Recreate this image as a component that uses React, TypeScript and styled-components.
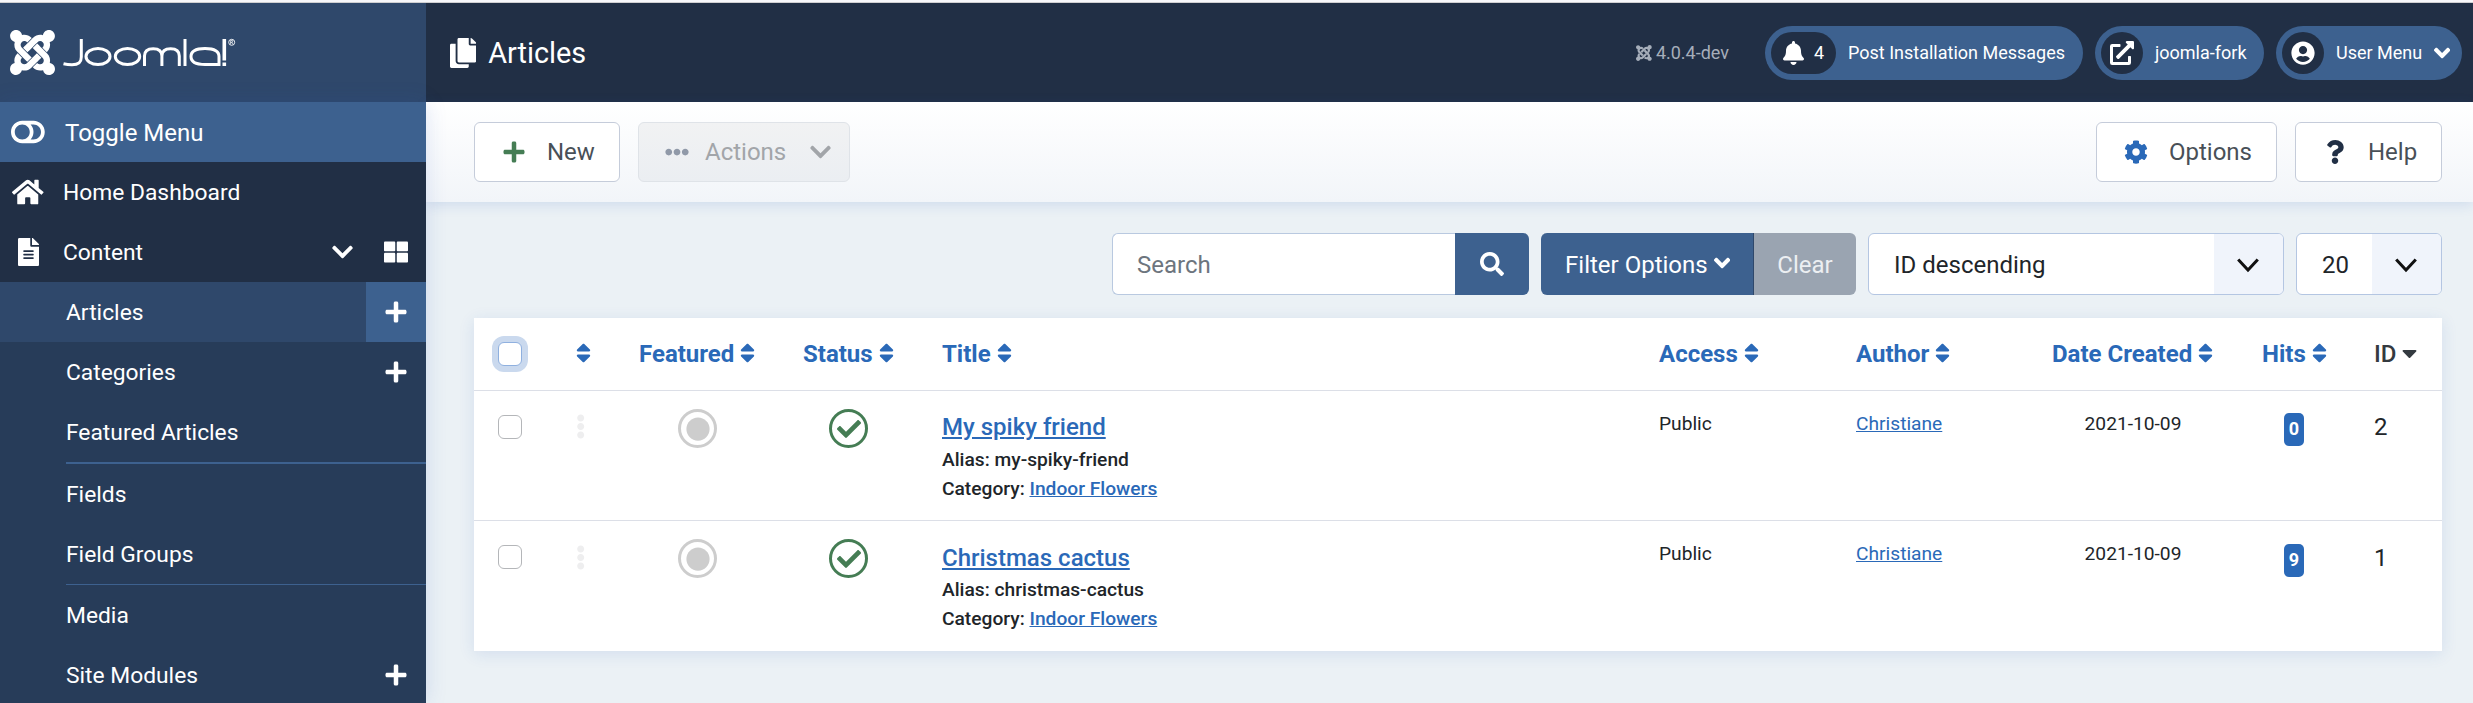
import React from 'react';
import styled, { createGlobalStyle, css } from 'styled-components';
import {
  FaJoomla, FaToggleOff, FaHome, FaFileAlt, FaThLarge, FaPlus, FaCopy, FaBell, FaExternalLinkAlt,
  FaUserCircle, FaAngleDown, FaEllipsisH, FaEllipsisV, FaChevronDown, FaCog, FaQuestion, FaSearch, FaSort,
  FaCaretDown, FaCheck, FaCircle,
} from 'react-icons/fa';

const GlobalStyle = createGlobalStyle`
  *, *::before, *::after { box-sizing: border-box; }
  body {
    margin: 0;
    background: #ebf1f5;
    font-family: Roboto, "Liberation Sans", sans-serif;
    font-size: 24px;
    line-height: 36px;
    color: #212529;
    overflow: hidden;
  }
  svg { display: block; flex: none; }
`;

const Page = styled.div`
  height: 703px;
  overflow: hidden;
  display: flex;
  flex-direction: column;
`;
const Glyph = styled.span<{ $size: number; $w: number; $color?: string }>`
  display: inline-flex;
  flex: none;
  color: ${(p) => p.$color ?? 'inherit'};
  svg {
    height: ${(p) => p.$size}px;
    width: ${(p) => p.$w}px;
  }
`;
const WindowEdge = styled.div`
  height: 3px;
  flex: none;
  background: #f7f7fa;
  border-bottom: 1px solid #cfcfd1;
`;
const Header = styled.header`
  height: 99px;
  flex: none;
  display: flex;
  background: #212f45;
  color: #fff;
`;
const Brand = styled.div`
  width: 426px;
  background: #2f486b;
  padding: 26px 0 0 9px;
`;
const Heading = styled.h1`
  margin: 0;
  padding-left: 24px;
  display: flex;
  align-items: center;
  gap: 12px;
  font-size: 28.8px;
  font-weight: 400;
  flex: 1;
`;
const HeaderItems = styled.div`
  display: flex;
  align-items: center;
  padding-right: 11px;
  gap: 12px;
  font-size: 18px;
  white-space: nowrap;
`;
const Version = styled.div`
  display: flex;
  align-items: center;
  gap: 4px;
  margin-right: 24px;
  color: #a6aeba;
`;
const Pill = styled.a<{ $w: number }>`
  width: ${(p) => p.$w}px;
  height: 54px;
  border-radius: 27px;
  background: #3d618f;
  padding: 0 6px;
  display: flex;
  align-items: center;
`;
const PillIcon = styled.span<{ $wide?: boolean }>`
  height: 42px;
  flex: none;
  width: ${(p) => (p.$wide ? 65 : 42)}px;
  border-radius: 21px;
  margin-right: 12px;
  background: #212f45;
  display: flex;
  align-items: center;
  justify-content: center;
  gap: 10px;
`;
const PillArrow = styled(Glyph)`
  margin-left: 12px;
`;
const Body = styled.div`
  flex: 1;
  display: flex;
  min-height: 0;
`;
const Sidebar = styled.nav`
  width: 426px;
  flex: none;
  background: #273c59;
  color: #fff;
  font-size: 22.8px;
  box-shadow: 0 0 20px rgba(40, 90, 190, 0.15);
  z-index: 1;
`;
const MenuItem = styled.div<{ $tone: string }>`
  height: 60px;
  display: flex;
  align-items: center;
  background: ${(p) => p.$tone};
`;
const ToggleItem = styled(MenuItem)`
  font-size: 24px;
`;
const MenuIcon = styled.span`
  width: 56px;
  margin-right: 7px;
  display: flex;
  justify-content: center;
`;
const MenuLabel = styled.span`
  flex: 1;
  padding-top: 1px;
`;
const ToggleLabel = styled.span`
  padding: 2px 0 0 2px;
`;
const MenuArrow = styled(Glyph)`
  margin-right: 13px;
`;
const MenuTool = styled.span<{ $on?: boolean }>`
  width: 60px;
  height: 60px;
  display: flex;
  align-items: center;
  justify-content: center;
  background: ${(p) => (p.$on ? '#3d618f' : 'transparent')};
`;
const SubItem = styled(MenuItem)`
  padding-left: 66px;
`;
const Divider = styled.div<{ $h: number }>`
  height: ${(p) => p.$h}px;
  margin-left: 66px;
  background: #3d618f;
`;
const Main = styled.main`
  flex: 1;
  min-width: 0;
`;
const Toolbar = styled.div`
  height: 100px;
  padding: 0 31px 0 48px;
  display: flex;
  align-items: center;
  background: linear-gradient(#fff, #f2f5f9);
  box-shadow: 0 3px 12px rgba(40, 90, 190, 0.14);
`;
const ToolButton = styled.button<{ $w: number; $ml?: string; $off?: boolean }>`
  width: ${(p) => p.$w}px;
  height: 60px;
  margin-left: ${(p) => p.$ml ?? '0'};
  padding: 0 0 0 27px;
  border: 1px solid #c5ccda;
  border-radius: 6px;
  background: #fff;
  font: inherit;
  color: #495057;
  display: flex;
  align-items: center;
  ${(p) => p.$off && css`
    padding-left: 26px;
    background: linear-gradient(#f1f2f3, #ebeef2);
    border-color: #dfe3e8;
    color: #a2a5a9;
  `}
`;
const ToolIcon = styled.span<{ $color: string; $gap: number }>`
  color: ${(p) => p.$color};
  margin-right: ${(p) => p.$gap}px;
`;
const ToolArrow = styled(Glyph)`
  margin-left: 24px;
`;
const Filters = styled.div`
  padding: 31px 31px 0 0;
  display: flex;
  justify-content: flex-end;
  gap: 12px;
`;
const SearchGroup = styled.div`
  display: flex;
  height: 62px;
  width: 417px;
`;
const SearchField = styled.div`
  flex: 1;
  border: 1px solid #b9c9e0;
  border-right: 0;
  border-radius: 6px 0 0 6px;
  background: #fff;
  padding: 13px 24px 0;
  color: #6d757e;
`;
const SearchButton = styled.button`
  width: 74px;
  border: 0;
  border-radius: 0 6px 6px 0;
  background: #3d618f;
  color: #fff;
  padding: 0;
  display: flex;
  align-items: center;
  justify-content: center;
`;
const FilterGroup = styled.div`
  display: flex;
  height: 62px;
  width: 315px;
`;
const FilterButton = styled.button<{ $muted?: boolean }>`
  border: 0;
  font: inherit;
  padding: 2px 0 0;
  display: flex;
  align-items: center;
  justify-content: center;
  gap: 6px;
  width: ${(p) => (p.$muted ? 102 : 213)}px;
  border-radius: ${(p) => (p.$muted ? '0 6px 6px 0' : '6px 0 0 6px')};
  background: ${(p) => (p.$muted ? '#9aa4b1' : '#3d618f')};
  color: ${(p) => (p.$muted ? '#eceff2' : '#fff')};
  box-shadow: ${(p) => (p.$muted ? 'none' : 'inset -1px 0 0 #2f486b')};
`;
const FilterArrow = styled(Glyph)`
  margin-top: -4px;
`;
const Select = styled.div<{ $w: number }>`
  width: ${(p) => p.$w}px;
  height: 62px;
  border: 1px solid #b4c6e2;
  border-radius: 6px;
  background: #fff;
  overflow: hidden;
  display: flex;
  padding-left: 25px;
  justify-content: space-between;
  line-height: 62px;
`;
const SelectArrow = styled.span`
  width: 69px;
  height: 100%;
  background: #f0f4fb;
  display: flex;
  align-items: center;
  justify-content: center;
  padding: 3px 2px 0 0;
`;
const Table = styled.div`
  margin: 23px 31px 0 48px;
  background: #fff;
  box-shadow: 0 3px 15px rgba(40, 90, 190, 0.12);
`;
const Row = styled.div<{ $head?: boolean; $h: number }>`
  height: ${(p) => p.$h}px;
  display: grid;
  grid-template-columns: 71px 75px 155px 148px 717px 197px 181px 224px 102px 98px;
  border-top: ${(p) => (p.$head ? 0 : 1)}px solid #dcdfe7;
`;
const Cell = styled.div<{ $top: number; $left?: number; $right?: number; $center?: boolean }>`
  padding: ${(p) => p.$top}px ${(p) => p.$right ?? 0}px 0 ${(p) => p.$left ?? 0}px;
  ${(p) => p.$center && css`
    display: flex;
    justify-content: center;
    align-items: flex-start;
  `}
`;
const SortLink = styled.span<{ $plain?: boolean }>`
  display: inline-flex;
  align-items: center;
  gap: 6px;
  height: 36px;
  font-weight: ${(p) => (p.$plain ? 500 : 700)};
  color: ${(p) => (p.$plain ? '#343a40' : '#2a69b8')};
  white-space: nowrap;
`;
const SortText = styled.span`
  padding-top: 2px;
`;
const Checkbox = styled.span<{ $focus?: boolean }>`
  display: block;
  width: 24px;
  height: 24px;
  border: 1px solid ${(p) => (p.$focus ? '#8fb0df' : '#b4b6b9')};
  border-radius: 6px;
  background: #fff;
  box-shadow: ${(p) => (p.$focus ? '0 0 0 6px #cad9ee' : 'none')};
`;
const Badge = styled.span<{ $color: string }>`
  width: 39px;
  height: 39px;
  border: 3px solid ${(p) => p.$color};
  border-radius: 50%;
  color: ${(p) => p.$color};
  display: flex;
  align-items: center;
  justify-content: center;
`;
const Link = styled.a`
  color: #2a69b8;
  text-decoration: underline;
`;
const Title = styled.div<{ $drop: number }>`
  font-weight: 500;
  line-height: 36px;
  padding-top: ${(p) => p.$drop}px;
  margin-bottom: ${(p) => -p.$drop}px;
`;
const Small = styled.div<{ $medium?: boolean }>`
  font-size: 19.2px;
  line-height: 29px;
  font-weight: ${(p) => (p.$medium ? 500 : 400)};
`;
const Hits = styled.span`
  width: 20px;
  height: 33px;
  border-radius: 5px;
  background: #2a69b8;
  color: #fff;
  font-size: 18px;
  font-weight: 700;
  line-height: 32px;
  text-align: center;
`;

const Logo = () => (
  <svg width="232" height="54" viewBox="0 0 232 54" fill="none" stroke="#fff">
    <FaJoomla x="-2.2" y="-2.2" size={51.4} color="#fff" stroke="none" />
    <g strokeWidth="3">
      <path d="M72.300 10V28C72.300 33.500 69.500 35.800 63 35.800C59.500 35.800 57 35.400 54.500 34.800" />
      <ellipse cx="89" cy="27.500" rx="12" ry="8" />
      <ellipse cx="118.500" cy="27.500" rx="12.200" ry="8" />
      <path d="M135.500 37V27C135.500 22 138.500 19.700 144.200 19.700S152.900 22 152.900 27V37M152.900 27C152.900 22 156 19.700 161.600 19.700S170.300 22 170.300 27V37" />
      <path d="M176 10V37" />
      <path d="M210 37V27.500C210 22 205 19.500 196 19.500S182 22.500 182 27.500S187 35.500 196 35.500H210" />
    </g>
    <path d="M215.300 10V31.500M215.300 33.500V37" strokeWidth="3.600" />
    <circle cx="222.700" cy="13.300" r="3" strokeWidth="0.900" />
    <path d="M221.600 15.300V11.500H223.400V13.400H221.600M222.600 13.400L224 15.300" strokeWidth="0.700" />
  </svg>
);

const columns = ['Featured', 'Status', 'Title', 'Access', 'Author', 'Date Created', 'Hits'];
const lefts = [19, 28, 19, 19, 19, 34, 20];
const articles = [
  { title: 'My spiky friend', alias: 'my-spiky-friend', hits: 0, id: 2, drop: 0 },
  { title: 'Christmas cactus', alias: 'christmas-cactus', hits: 9, id: 1, drop: 1 },
];
const submenu: { label: string; add?: boolean; on?: boolean; line?: number }[] = [
  { label: 'Articles', add: true, on: true },
  { label: 'Categories', add: true },
  { label: 'Featured Articles', line: 2 },
  { label: 'Fields' },
  { label: 'Field Groups', line: 1 },
  { label: 'Media' },
  { label: 'Site Modules', add: true },
];

const SelectChevron = () => (
  <svg width="22" height="15" viewBox="0 0 22 15" fill="none" stroke="#111" strokeWidth="3">
    <path d="M1.200 1.500L11 12L20.800 1.500" />
  </svg>
);

export default function App() {
  return (
    <Page>
      <GlobalStyle />
      <WindowEdge />
      <Header>
        <Brand><Logo /></Brand>
        <Heading><Glyph $size={30} $w={26.25}><FaCopy /></Glyph>Articles</Heading>
        <HeaderItems>
          <Version><Glyph $size={18} $w={15.75}><FaJoomla /></Glyph>4.0.4-dev</Version>
          <Pill $w={318}><PillIcon $wide><Glyph $size={24} $w={21}><FaBell /></Glyph>4</PillIcon>Post Installation Messages</Pill>
          <Pill $w={169}><PillIcon><Glyph $size={24} $w={24}><FaExternalLinkAlt /></Glyph></PillIcon>joomla-fork</Pill>
          <Pill $w={186}>
            <PillIcon><Glyph $size={24} $w={24}><FaUserCircle /></Glyph></PillIcon>
            User Menu
            <PillArrow $size={26} $w={16.25}><FaAngleDown /></PillArrow>
          </Pill>
        </HeaderItems>
      </Header>
      <Body>
        <Sidebar>
          <ToggleItem $tone="#3d618f">
            <MenuIcon><Glyph $size={30} $w={33.75}><FaToggleOff /></Glyph></MenuIcon>
            <ToggleLabel>Toggle Menu</ToggleLabel>
          </ToggleItem>
          <MenuItem $tone="#212f45">
            <MenuIcon><Glyph $size={28} $w={31.5}><FaHome /></Glyph></MenuIcon>
            <MenuLabel>Home Dashboard</MenuLabel>
          </MenuItem>
          <MenuItem $tone="#212f45">
            <MenuIcon><Glyph $size={28} $w={21}><FaFileAlt /></Glyph></MenuIcon>
            <MenuLabel>Content</MenuLabel>
            <MenuArrow $size={24} $w={21}><FaChevronDown /></MenuArrow>
            <MenuTool><Glyph $size={24} $w={24}><FaThLarge /></Glyph></MenuTool>
          </MenuItem>
          {submenu.map((m) => (
            <React.Fragment key={m.label}>
              <SubItem $tone={m.on ? '#2f486b' : 'transparent'}>
                <MenuLabel>{m.label}</MenuLabel>
                {m.add && <MenuTool $on={m.on}><Glyph $size={24} $w={22}><FaPlus /></Glyph></MenuTool>}
              </SubItem>
              {m.line && <Divider $h={m.line} />}
            </React.Fragment>
          ))}
        </Sidebar>
        <Main>
          <Toolbar>
            <ToolButton $w={146}><ToolIcon $color="#457d54" $gap={21}><FaPlus size={24} /></ToolIcon>New</ToolButton>
            <ToolButton $w={212} $ml="18px" $off>
              <ToolIcon $color="#9099a8" $gap={16}><FaEllipsisH size={24} /></ToolIcon>
              Actions
              <ToolArrow $size={24} $w={21}><FaChevronDown /></ToolArrow>
            </ToolButton>
            <ToolButton $w={181} $ml="auto"><ToolIcon $color="#2a69b8" $gap={21}><FaCog size={24} /></ToolIcon>Options</ToolButton>
            <ToolButton $w={147} $ml="18px"><ToolIcon $color="#212f45" $gap={21}><FaQuestion size={24} /></ToolIcon>Help</ToolButton>
          </Toolbar>
          <Filters>
            <SearchGroup>
              <SearchField>Search</SearchField>
              <SearchButton><FaSearch size={24} /></SearchButton>
            </SearchGroup>
            <FilterGroup>
              <FilterButton>Filter Options<FilterArrow $size={26} $w={16.25}><FaAngleDown /></FilterArrow></FilterButton>
              <FilterButton $muted>Clear</FilterButton>
            </FilterGroup>
            <Select $w={416}>ID descending<SelectArrow><SelectChevron /></SelectArrow></Select>
            <Select $w={146}>20<SelectArrow><SelectChevron /></SelectArrow></Select>
          </Filters>
          <Table>
            <Row $head $h={72}>
              <Cell $top={24} $left={24}><Checkbox $focus /></Cell>
              <Cell $top={17} $left={2} $center><SortLink><Glyph $size={24} $w={15}><FaSort /></Glyph></SortLink></Cell>
              {columns.map((c, i) => (
                <Cell key={c} $top={17} $left={lefts[i]}>
                  <SortLink><SortText>{c}</SortText><Glyph $size={24} $w={15}><FaSort /></Glyph></SortLink>
                </Cell>
              ))}
              <Cell $top={17} $left={30}>
                <SortLink $plain><SortText>ID</SortText><Glyph $size={24} $w={15}><FaCaretDown /></Glyph></SortLink>
              </Cell>
            </Row>
            {articles.map((a) => (
              <Row key={a.id} $h={130 + a.drop}>
                <Cell $top={24} $left={24}><Checkbox /></Cell>
                <Cell $top={23 + a.drop} $right={4} $center>
                  <Glyph $size={25} $w={9.4} $color="#eeeeef"><FaEllipsisV /></Glyph>
                </Cell>
                <Cell $top={18} $center><Badge $color="#cdcdcd"><FaCircle size={24} /></Badge></Cell>
                <Cell $top={18} $right={1} $center><Badge $color="#457d54"><FaCheck size={24} /></Badge></Cell>
                <Cell $top={18} $left={19}>
                  <Title $drop={a.drop}><Link>{a.title}</Link></Title>
                  <Small $medium>Alias: {a.alias}</Small>
                  <Small $medium>Category: <Link>Indoor Flowers</Link></Small>
                </Cell>
                <Cell $top={18} $left={19}><Small>Public</Small></Cell>
                <Cell $top={18} $left={19}><Small><Link>Christiane</Link></Small></Cell>
                <Cell $top={18} $left={6} $center><Small>2021-10-09</Small></Cell>
                <Cell $top={22 + a.drop} $left={2} $center><Hits>{a.hits}</Hits></Cell>
                <Cell $top={18 + a.drop} $left={30}>{a.id}</Cell>
              </Row>
            ))}
          </Table>
        </Main>
      </Body>
    </Page>
  );
}
